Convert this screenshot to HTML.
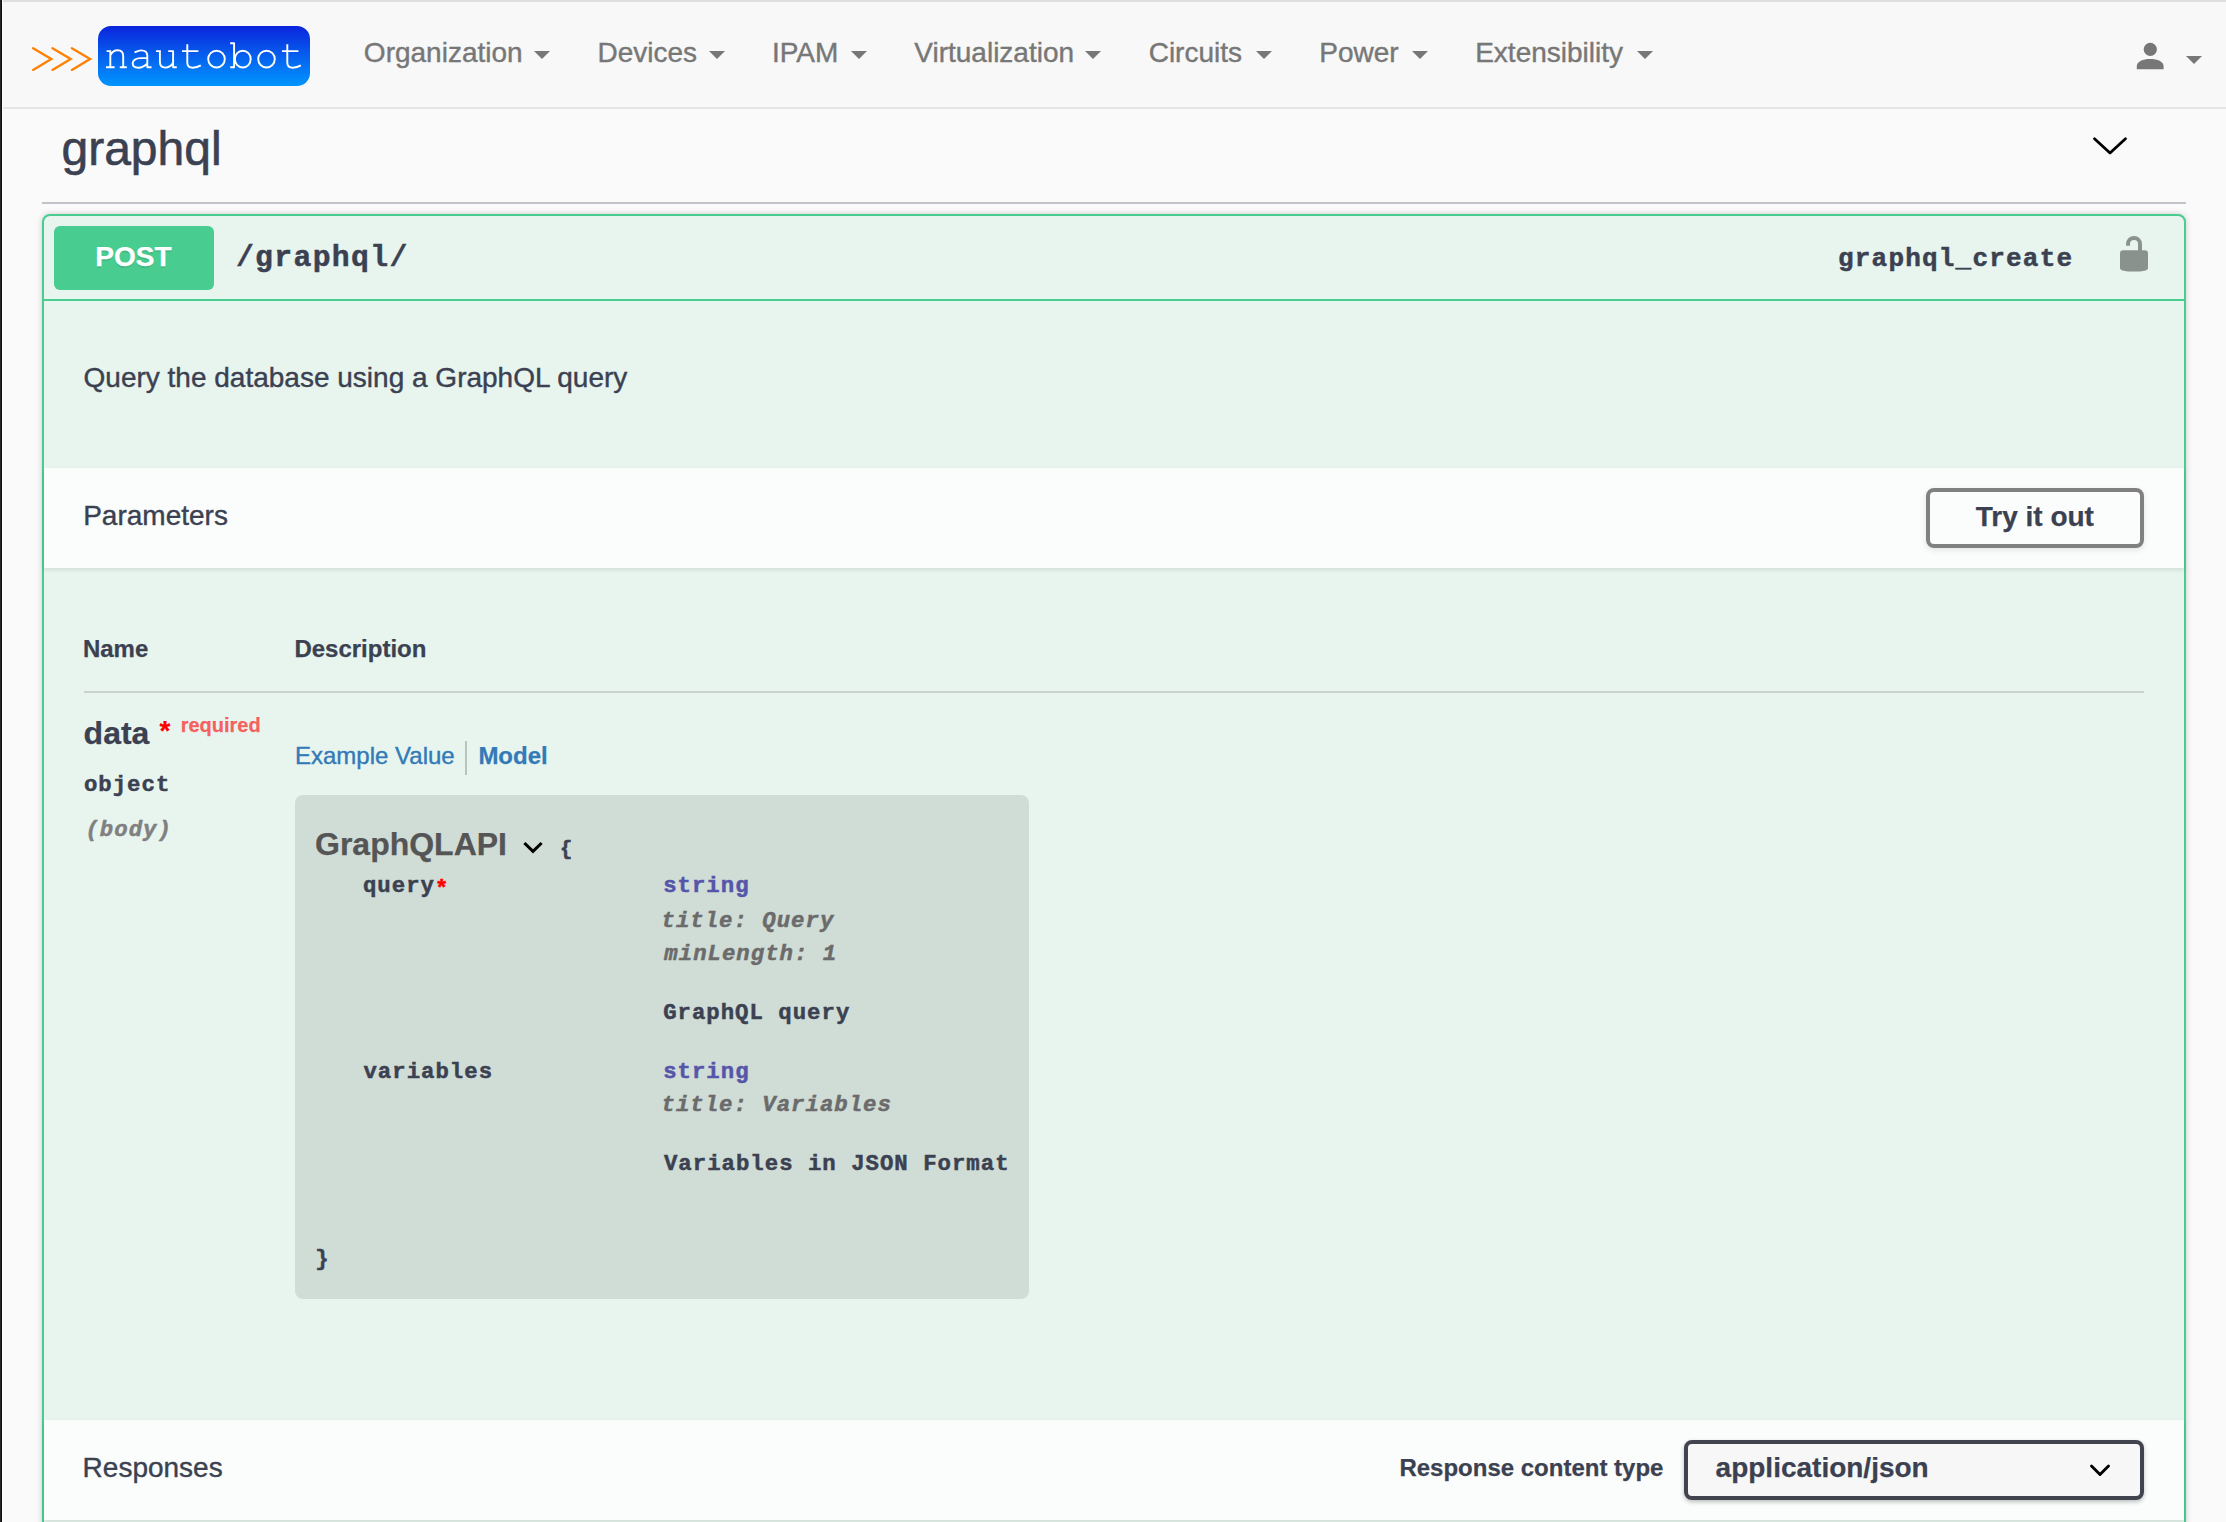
<!DOCTYPE html>
<html><head><meta charset="utf-8"><style>
html,body{margin:0;padding:0;width:2226px;height:1522px;overflow:hidden;background:#fafafa;}
.b{position:absolute;}
.t{position:absolute;white-space:pre;}
.caret{width:0;height:0;border-top:8px solid #777;border-left:8px solid transparent;border-right:8px solid transparent;}
</style></head><body>
<div class="b" style="left:0px;top:0px;width:2226px;height:2px;background:#dedede;"></div>
<div class="b" style="left:0px;top:2px;width:2226px;height:105px;background:#f8f8f8;"></div>
<div class="b" style="left:0px;top:107px;width:2226px;height:2px;background:#e5e5e5;"></div>
<svg class="b" style="left:0;top:0" width="120" height="100" viewBox="0 0 120 100"><g fill="none" stroke="#ff8000" stroke-width="2.3" stroke-linecap="round" stroke-linejoin="miter"><path d="M33.1 48.2 L51.3 59 L33.1 69.9"/><path d="M52.5 48.2 L70.7 59 L52.5 69.9"/><path d="M71.9 48.2 L90.1 59 L71.9 69.9"/></g></svg>
<div class="b" style="left:98px;top:26px;width:212px;height:60px;border-radius:13px;background:linear-gradient(180deg,#0a24dd 0%,#0660ee 50%,#0096ff 100%);"></div>
<svg class="b" style="left:98px;top:26px" width="212" height="60" viewBox="98 26 212 60"><g fill="none" stroke="#fff" stroke-width="1.9" stroke-linecap="butt" stroke-linejoin="round">
<path d="M106.6 51.1 H111.2 M110.3 51.1 V67.2 M106 67.2 H114.6 M110.3 55.2 C112 52.2 114.5 50.3 117.6 50.3 C121.2 50.3 123.2 52.6 123.2 56.2 V67.2 M119.8 67.2 H126.8"/>
<path d="M134.5 52.4 C136.8 51.4 138.8 50.4 141 50.4 C144.8 50.4 147.3 52.2 147.3 55.6 V67.2 H151.5 M147.3 58.1 L140.6 58.1 C135.5 58.1 132.7 60.8 132.7 63.2 C132.7 66 135 67.7 138.4 67.7 C141.8 67.7 144.6 66.3 147.3 63.8"/>
<path d="M156 51.1 H160.9 M159.9 51.1 V61.8 C159.9 65.6 161.9 67.6 165.3 67.6 C168.6 67.6 171.4 65.6 173.1 62.8 M168.2 51.1 H173.1 V67.2 H176.8"/>
<path d="M182 51.1 H198.4 M187.3 44.2 V62.8 C187.3 66.2 189.3 67.7 192.8 67.7 C195.8 67.7 198.6 66.8 200.8 65.4"/>
<ellipse cx="216.5" cy="59.1" rx="8.3" ry="8.4"/>
<path d="M230.2 43.2 H234.1 V67.2 H230.2"/>
<ellipse cx="242.8" cy="59.1" rx="7.9" ry="8.4"/>
<ellipse cx="266.5" cy="59.1" rx="8.3" ry="8.4"/>
<path d="M282 51.1 H298.4 M287.3 44.2 V62.8 C287.3 66.2 289.3 67.7 292.8 67.7 C295.8 67.7 298.6 66.8 300.8 65.4"/>
</g></svg>
<div class="t" style="left:363.87px;top:36.29px;font-family:'Liberation Sans', sans-serif;font-size:28px;line-height:34px;color:#777;-webkit-text-stroke:0.4px currentColor;">Organization</div>
<div class="b caret" style="left:534px;top:51px;"></div>
<div class="t" style="left:597.50px;top:36.29px;font-family:'Liberation Sans', sans-serif;font-size:28px;line-height:34px;color:#777;-webkit-text-stroke:0.4px currentColor;">Devices</div>
<div class="b caret" style="left:709px;top:51px;"></div>
<div class="t" style="left:771.92px;top:36.29px;font-family:'Liberation Sans', sans-serif;font-size:28px;line-height:34px;color:#777;-webkit-text-stroke:0.4px currentColor;">IPAM</div>
<div class="b caret" style="left:851px;top:51px;"></div>
<div class="t" style="left:914.28px;top:36.29px;font-family:'Liberation Sans', sans-serif;font-size:28px;line-height:34px;color:#777;-webkit-text-stroke:0.4px currentColor;">Virtualization</div>
<div class="b caret" style="left:1085px;top:51px;"></div>
<div class="t" style="left:1148.68px;top:36.29px;font-family:'Liberation Sans', sans-serif;font-size:28px;line-height:34px;color:#777;-webkit-text-stroke:0.4px currentColor;">Circuits</div>
<div class="b caret" style="left:1256px;top:51px;"></div>
<div class="t" style="left:1319.30px;top:36.29px;font-family:'Liberation Sans', sans-serif;font-size:28px;line-height:34px;color:#777;-webkit-text-stroke:0.4px currentColor;">Power</div>
<div class="b caret" style="left:1412px;top:51px;"></div>
<div class="t" style="left:1475.20px;top:36.29px;font-family:'Liberation Sans', sans-serif;font-size:28px;line-height:34px;color:#777;-webkit-text-stroke:0.4px currentColor;">Extensibility</div>
<div class="b caret" style="left:1637px;top:51px;"></div>
<svg class="b" style="left:2130px;top:38px" width="40" height="36" viewBox="2130 38 40 36"><circle cx="2150.3" cy="49.3" r="6.6" fill="#777"/><path d="M2136.8 69.2 L2136.8 66 C2136.8 61.5 2143 58.9 2150.2 58.9 C2157.4 58.9 2163.6 61.5 2163.6 66 L2163.6 69.2 Z" fill="#777"/></svg>
<div class="b caret" style="left:2186px;top:56px;"></div>
<div class="b" style="left:0px;top:109px;width:2226px;height:1413px;background:#fafafa;"></div>
<div class="b" style="left:0px;top:0px;width:1px;height:1522px;background:#262629;"></div>
<div class="b" style="left:1px;top:0px;width:1px;height:1522px;background:#0c0c0c;"></div>
<div class="b" style="left:2px;top:0px;width:1px;height:1522px;background:#fff;"></div>
<div class="t" style="left:61.48px;top:119.96px;font-family:'Liberation Sans', sans-serif;font-size:48px;line-height:58px;color:#3b4151;-webkit-text-stroke:0.6px currentColor;">graphql</div>
<svg class="b" style="left:2085px;top:130px" width="50" height="32" viewBox="2085 130 50 32"><path d="M2094.5 138.8 L2110 153 L2125.5 138.8" fill="none" stroke="#000" stroke-width="2.8" stroke-linecap="round" stroke-linejoin="round"/></svg>
<div class="b" style="left:42px;top:202px;width:2144px;height:2px;background:#c1c3c8;"></div>
<div class="b" style="left:42px;top:214px;width:2144px;height:1386px;box-sizing:border-box;border:2px solid #49cc90;border-radius:8px;background:#e8f5ef;box-shadow:0 0 6px rgba(0,0,0,.19);"></div>
<div class="b" style="left:44px;top:299px;width:2140px;height:2px;background:#49cc90;"></div>
<div class="b" style="left:54px;top:226px;width:160px;height:64px;border-radius:6px;background:#49cc90;"></div>
<div class="t" style="left:95.33px;top:239.59px;font-family:'Liberation Sans', sans-serif;font-size:28px;line-height:34px;color:#fff;font-weight:bold;-webkit-text-stroke:0.25px currentColor;text-shadow:0 2px 0 rgba(0,0,0,.1);">POST</div>
<div class="t" style="left:235.91px;top:240.38px;font-family:'Liberation Mono', monospace;font-size:29.76px;line-height:36px;color:#3b4151;font-weight:bold;-webkit-text-stroke:0.5px currentColor;letter-spacing:1.34px;">/graphql/</div>
<div class="t" style="left:1838.02px;top:243.57px;font-family:'Liberation Mono', monospace;font-size:26.04px;line-height:31px;color:#3b4151;font-weight:bold;-webkit-text-stroke:0.5px currentColor;letter-spacing:1.18px;">graphql_create</div>
<svg class="b" style="left:2115px;top:230px" width="40" height="48" viewBox="2115 230 40 48"><path d="M2128 245.8 L2128 244 A6 6 0 0 1 2140 244 L2140 251" fill="none" stroke="#8a928d" stroke-width="4"/><path d="M2120 253 C2120 251.3 2121.2 250.2 2123 250.2 L2145 250.2 C2146.8 250.2 2148 251.3 2148 253 L2148 268.2 C2148 270.6 2142 271.6 2134 271.6 C2126 271.6 2120 270.6 2120 268.2 Z" fill="#8a928d"/></svg>
<div class="t" style="left:83.57px;top:361.09px;font-family:'Liberation Sans', sans-serif;font-size:28px;line-height:34px;color:#3b4151;-webkit-text-stroke:0.4px currentColor;">Query the database using a GraphQL query</div>
<div class="b" style="left:44px;top:468px;width:2140px;height:100px;background:rgba(255,255,255,.8);box-shadow:0 2px 4px rgba(0,0,0,.1);"></div>
<div class="t" style="left:83.20px;top:499.19px;font-family:'Liberation Sans', sans-serif;font-size:28px;line-height:34px;color:#3b4151;-webkit-text-stroke:0.4px currentColor;">Parameters</div>
<div class="b" style="left:1926px;top:488px;width:218px;height:60px;box-sizing:border-box;border:4px solid #808080;border-radius:8px;box-shadow:0 2px 6px rgba(0,0,0,.1);"></div>
<div class="t" style="left:1975.69px;top:499.69px;font-family:'Liberation Sans', sans-serif;font-size:28px;line-height:34px;color:#3b4151;font-weight:bold;-webkit-text-stroke:0.25px currentColor;">Try it out</div>
<div class="t" style="left:82.89px;top:633.78px;font-family:'Liberation Sans', sans-serif;font-size:24px;line-height:29px;color:#3b4151;font-weight:bold;-webkit-text-stroke:0.25px currentColor;">Name</div>
<div class="t" style="left:294.39px;top:633.78px;font-family:'Liberation Sans', sans-serif;font-size:24px;line-height:29px;color:#3b4151;font-weight:bold;-webkit-text-stroke:0.25px currentColor;">Description</div>
<div class="b" style="left:84px;top:691px;width:2060px;height:2px;background:#c9d2ce;"></div>
<div class="t" style="left:83.59px;top:713.81px;font-family:'Liberation Sans', sans-serif;font-size:32px;line-height:38px;color:#3b4151;font-weight:bold;-webkit-text-stroke:0.25px currentColor;">data</div>
<div class="t" style="left:159.42px;top:713.69px;font-family:'Liberation Sans', sans-serif;font-size:28px;line-height:34px;color:#f00;font-weight:bold;-webkit-text-stroke:0.25px currentColor;">*</div>
<div class="t" style="left:180.68px;top:713.07px;font-family:'Liberation Sans', sans-serif;font-size:20px;line-height:24px;color:rgba(255,0,0,.6);font-weight:bold;-webkit-text-stroke:0.25px currentColor;">required</div>
<div class="t" style="left:83.90px;top:772.26px;font-family:'Liberation Mono', monospace;font-size:22.32px;line-height:27px;color:#3b4151;font-weight:bold;-webkit-text-stroke:0.5px currentColor;letter-spacing:1.01px;">object</div>
<div class="t" style="left:85.48px;top:816.56px;font-family:'Liberation Mono', monospace;font-size:22.32px;line-height:27px;color:#808080;font-weight:bold;-webkit-text-stroke:0.5px currentColor;font-style:italic;letter-spacing:1.01px;">(body)</div>
<div class="t" style="left:295.03px;top:741.18px;font-family:'Liberation Sans', sans-serif;font-size:24px;line-height:29px;color:#337ab7;-webkit-text-stroke:0.4px currentColor;">Example Value</div>
<div class="b" style="left:465px;top:741px;width:2px;height:34px;background:rgba(0,0,0,.2);"></div>
<div class="t" style="left:478.39px;top:741.18px;font-family:'Liberation Sans', sans-serif;font-size:24px;line-height:29px;color:#337ab7;font-weight:bold;-webkit-text-stroke:0.25px currentColor;">Model</div>
<div class="b" style="left:295px;top:795px;width:734px;height:504px;border-radius:8px;background:rgba(0,0,0,.1);"></div>
<div class="t" style="left:314.99px;top:825.31px;font-family:'Liberation Sans', sans-serif;font-size:32px;line-height:38px;color:#555;font-weight:bold;-webkit-text-stroke:0.25px currentColor;">GraphQLAPI</div>
<svg class="b" style="left:515px;top:832px" width="36" height="30" viewBox="515 832 36 30"><path d="M524.4 843 L533 851.3 L541.6 843" fill="none" stroke="#000" stroke-width="3.1" stroke-linecap="butt" stroke-linejoin="miter"/></svg>
<div class="t" style="left:560.06px;top:837.06px;font-family:'Liberation Mono', monospace;font-size:20.46px;line-height:25px;color:#3b4151;font-weight:bold;-webkit-text-stroke:0.6px #3b4151;letter-spacing:0.92px;">{</div>
<div class="t" style="left:362.94px;top:873.36px;font-family:'Liberation Mono', monospace;font-size:22.32px;line-height:27px;color:#3b4151;font-weight:bold;-webkit-text-stroke:0.5px currentColor;letter-spacing:1.01px;">query<span style="color:red;position:relative;top:3px">*</span></div>
<div class="t" style="left:663.18px;top:873.46px;font-family:'Liberation Mono', monospace;font-size:22.32px;line-height:27px;color:#55a;font-weight:bold;-webkit-text-stroke:0.5px currentColor;letter-spacing:1.01px;">string</div>
<div class="t" style="left:661.50px;top:907.56px;font-family:'Liberation Mono', monospace;font-size:22.32px;line-height:27px;color:#6b6b6b;font-weight:bold;-webkit-text-stroke:0.5px currentColor;font-style:italic;letter-spacing:1.01px;">title: Query</div>
<div class="t" style="left:664.33px;top:941.36px;font-family:'Liberation Mono', monospace;font-size:22.32px;line-height:27px;color:#6b6b6b;font-weight:bold;-webkit-text-stroke:0.5px currentColor;font-style:italic;letter-spacing:1.01px;">minLength: 1</div>
<div class="t" style="left:663.13px;top:1000.26px;font-family:'Liberation Mono', monospace;font-size:22.32px;line-height:27px;color:#3b4151;font-weight:bold;-webkit-text-stroke:0.5px currentColor;letter-spacing:1.01px;">GraphQL query</div>
<div class="t" style="left:363.46px;top:1058.76px;font-family:'Liberation Mono', monospace;font-size:22.32px;line-height:27px;color:#3b4151;font-weight:bold;-webkit-text-stroke:0.5px currentColor;letter-spacing:1.01px;">variables</div>
<div class="t" style="left:663.18px;top:1058.76px;font-family:'Liberation Mono', monospace;font-size:22.32px;line-height:27px;color:#55a;font-weight:bold;-webkit-text-stroke:0.5px currentColor;letter-spacing:1.01px;">string</div>
<div class="t" style="left:661.50px;top:1092.06px;font-family:'Liberation Mono', monospace;font-size:22.32px;line-height:27px;color:#6b6b6b;font-weight:bold;-webkit-text-stroke:0.5px currentColor;font-style:italic;letter-spacing:1.01px;">title: Variables</div>
<div class="t" style="left:663.97px;top:1151.16px;font-family:'Liberation Mono', monospace;font-size:22.32px;line-height:27px;color:#3b4151;font-weight:bold;-webkit-text-stroke:0.5px currentColor;letter-spacing:1.01px;">Variables in JSON Format</div>
<div class="t" style="left:315.29px;top:1245.96px;font-family:'Liberation Mono', monospace;font-size:22.32px;line-height:27px;color:#3b4151;font-weight:bold;-webkit-text-stroke:0.5px currentColor;letter-spacing:1.01px;">}</div>
<div class="b" style="left:44px;top:1420px;width:2140px;height:100px;background:rgba(255,255,255,.8);box-shadow:0 2px 4px rgba(0,0,0,.1);"></div>
<div class="t" style="left:82.60px;top:1450.79px;font-family:'Liberation Sans', sans-serif;font-size:28px;line-height:34px;color:#3b4151;-webkit-text-stroke:0.4px currentColor;">Responses</div>
<div class="t" style="left:1399.39px;top:1453.18px;font-family:'Liberation Sans', sans-serif;font-size:24px;line-height:29px;color:#3b4151;font-weight:bold;-webkit-text-stroke:0.25px currentColor;">Response content type</div>
<div class="b" style="left:1684px;top:1440px;width:460px;height:60px;box-sizing:border-box;border:4px solid #41444e;border-radius:8px;background:#f7f7f7;box-shadow:0 2px 4px rgba(0,0,0,.25);"></div>
<div class="t" style="left:1715.58px;top:1450.59px;font-family:'Liberation Sans', sans-serif;font-size:28px;line-height:34px;color:#3b4151;font-weight:bold;-webkit-text-stroke:0.25px currentColor;">application/json</div>
<svg class="b" style="left:2085px;top:1458px" width="30" height="24" viewBox="2085 1458 30 24"><path d="M2091.5 1466 L2100 1474.5 L2108.5 1466" fill="none" stroke="#000" stroke-width="2.9" stroke-linecap="round" stroke-linejoin="round"/></svg>
</body></html>
